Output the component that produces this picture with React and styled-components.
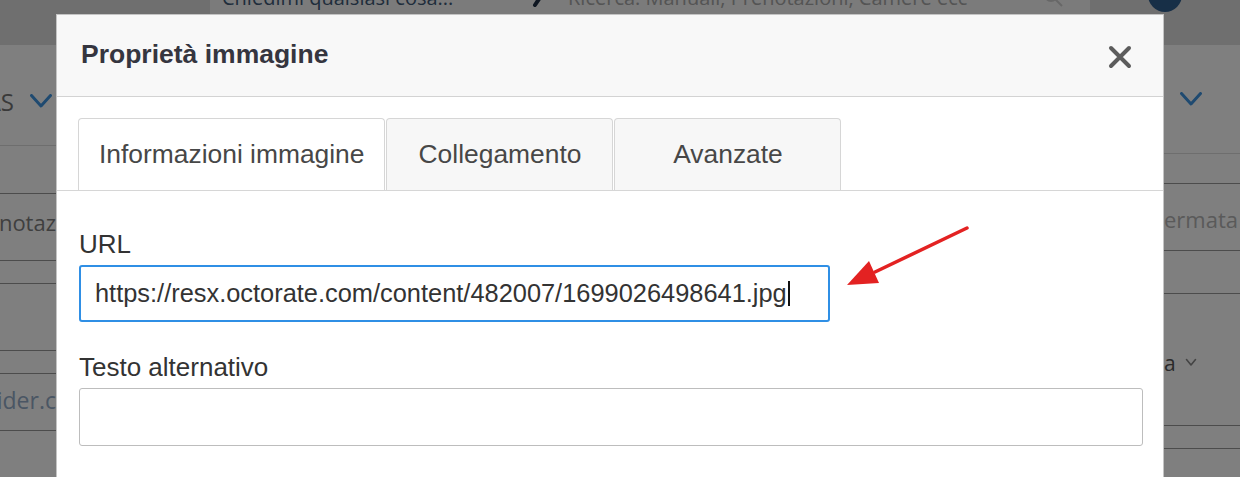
import React from "react";
import styled, { createGlobalStyle } from "styled-components";

const GlobalStyle = createGlobalStyle`
  html, body { margin: 0; padding: 0; }
  body {
    background: #fff;
    overflow: hidden;
    font-family: "Liberation Sans", Arial, sans-serif;
  }
`;

/* ---------- page behind the dialog ---------- */

const Page = styled.div`
  position: relative;
  width: 1240px;
  height: 477px;
  overflow: hidden;
  background: #ffffff;
  font-family: "Open Sans", "Noto Sans", sans-serif;
`;

const TopBar = styled.header`
  display: flex;
  align-items: flex-start;
  height: 45px;
  padding-left: 210px;
  box-sizing: border-box;
  background: #dedede;
`;

const SearchBox = styled.div`
  display: flex;
  align-items: center;
  gap: 20px;
  margin-top: -20px;
  width: 880px;
  height: 34px;
  padding-left: 12px;
  box-sizing: border-box;
  background: #f6f6f6;
`;

const Query = styled.span`
  width: 290px;
  font-size: 20px;
  color: #3f5a78;
  white-space: nowrap;
`;

const Hint = styled.span`
  flex: 1;
  font-size: 20px;
  color: #a8a8a8;
  white-space: nowrap;
`;

const Avatar = styled.div`
  width: 34px;
  height: 34px;
  margin-top: -22px;
  margin-left: 58px;
  border-radius: 50%;
  background: #2f5f8f;
`;

const Main = styled.main`
  display: flex;
  height: 432px;
`;

const SideCol = styled.div`
  width: ${(p) => p.$w}px;
  flex: none;
  display: flex;
  flex-direction: column;
  overflow: hidden;
`;

const Spacer = styled.div`
  flex: 1;
`;

const Row = styled.div`
  flex: none;
  height: ${(p) => p.$h}px;
  display: flex;
  align-items: center;
  justify-content: ${(p) => (p.$end ? "flex-end" : "flex-start")};
  gap: ${(p) => p.$gap || 0}px;
  padding: ${(p) => p.$pad || "0"};
  box-sizing: border-box;
  overflow: hidden;
  white-space: nowrap;
  border-bottom: 1px solid
    ${(p) =>
      p.$line === "faint" ? "#dcdcdc" : p.$line === "none" ? "transparent" : "#999999"};
`;

const BgText = styled.span`
  flex: none;
  font-size: ${(p) => p.$size || 21}px;
  color: ${(p) => p.$color || "#7e7e7e"};
`;

const Chevron = ({ w = 22, h = 12, color = "#3e94e0", sw = 3 }) => (
  <svg width={w} height={h + 2} viewBox={`0 0 ${w} ${h + 2}`} style={{ flex: "none" }}>
    <polyline
      points={`1.5,1.5 ${w / 2},${h} ${w - 1.5},1.5`}
      fill="none"
      stroke={color}
      strokeWidth={sw}
      strokeLinecap="round"
      strokeLinejoin="round"
    />
  </svg>
);

const Backdrop = styled.div`
  position: absolute;
  inset: 0;
  background: rgba(0, 0, 0, 0.5);
`;

/* ---------- dialog ---------- */

const Dialog = styled.section`
  position: absolute;
  left: 56px;
  top: 14px;
  width: 1108px;
  height: 540px;
  box-sizing: border-box;
  background: #ffffff;
  border: 1px solid #c4c4c4;
  font-family: "Liberation Sans", Arial, sans-serif;
`;

const DialogHeader = styled.div`
  display: flex;
  align-items: center;
  justify-content: space-between;
  height: 82px;
  padding: 0 31px 0 24px;
  box-sizing: border-box;
  background: #f8f8f8;
  border-bottom: 1px solid #d3d3d3;
`;

const Title = styled.h2`
  margin: 0 0 3px;
  font-size: 26.5px;
  line-height: 30px;
  font-weight: 700;
  color: #35353f;
`;

const CloseButton = styled.button`
  display: flex;
  padding: 0;
  margin-top: 2px;
  border: 0;
  background: none;
  cursor: pointer;
`;

const TabBar = styled.div`
  display: flex;
  gap: 1px;
  margin-top: 21px;
  padding-left: 21px;
  border-bottom: 1px solid #d6d6d6;
`;

const Tab = styled.div`
  display: flex;
  align-items: center;
  justify-content: center;
  min-width: 227px;
  height: 72px;
  padding: 0 20px;
  box-sizing: border-box;
  border: 1px solid #d6d6d6;
  border-bottom: 0;
  border-radius: 4px 4px 0 0;
  background: ${(p) => (p.$active ? "#ffffff" : "#f7f7f7")};
  font-size: 26.4px;
  color: #474747;
  white-space: nowrap;
`;

const DialogBody = styled.div`
  display: flex;
  flex-direction: column;
  gap: 30px;
  padding: 38px 20px 0 22px;
`;

const Field = styled.div`
  display: flex;
  flex-direction: column;
  gap: 6px;
`;

const Label = styled.label`
  font-size: 26px;
  line-height: 30px;
  color: #333333;
`;

const TextBox = styled.div`
  display: flex;
  align-items: center;
  width: ${(p) => (p.$w ? `${p.$w}px` : "100%")};
  height: ${(p) => p.$h}px;
  padding-left: 14px;
  box-sizing: border-box;
  border: ${(p) => (p.$focused ? "2px solid #2f8fe5" : "1px solid #bdbdbd")};
  border-radius: 3px;
  background: #ffffff;
  font-size: 25.4px;
  color: #333333;
  white-space: nowrap;
`;

const Caret = styled.span`
  display: inline-block;
  width: 2px;
  height: 25px;
  margin-left: 1px;
  background: #111;
`;

const Annotation = styled.svg`
  position: absolute;
  left: 784px;
  top: 206px;
  overflow: visible;
`;

export default function App() {
  return (
    <>
      <GlobalStyle />
      <Page>
        <TopBar>
          <SearchBox>
            <Query>Chiedimi qualsiasi cosa...</Query>
            <svg width="16" height="20" viewBox="0 0 16 20" style={{ flex: "none" }}>
              <path d="M3 18 L13 3" stroke="#1e2f44" strokeWidth="4" strokeLinecap="round" />
            </svg>
            <Hint>Ricerca: Manuali, Prenotazioni, Camere ecc</Hint>
            <svg width="22" height="22" viewBox="0 0 22 22" style={{ flex: "none", marginRight: 26 }}>
              <circle cx="9" cy="9" r="6" fill="none" stroke="#cfcfcf" strokeWidth="2" />
              <path d="M13.5 13.5 L20 20" stroke="#cfcfcf" strokeWidth="2" />
            </svg>
          </SearchBox>
          <Avatar />
        </TopBar>
        <Main>
          <SideCol $w={56}>
            <Row $h={101} $line="faint" $end $gap={16} $pad="12px 4px 0 0">
              <BgText $size={24} $color="#747474">Tutte le OTAS</BgText>
              <Chevron />
            </Row>
            <Row $h={48} />
            <Row $h={67} $end $pad="0 0 10px 0">
              <BgText $size={22}>Annotaz</BgText>
            </Row>
            <Row $h={23} />
            <Row $h={67} />
            <Row $h={23} />
            <Row $h={57} $end $pad="0 0 4px 0">
              <BgText $size={23} $color="#94acc8">info@booking.provider.c</BgText>
            </Row>
            <Row $h={60} $line="none" />
          </SideCol>
          <Spacer />
          <SideCol $w={76}>
            <Row $h={109} $line="faint" $pad="0 0 0 16px">
              <Chevron />
            </Row>
            <Row $h={30} />
            <Row $h={67} $pad="4px 0 0 0">
              <BgText $size={22} $color="#b4b4b4">ermata</BgText>
            </Row>
            <Row $h={43} />
            <Row $h={132} $gap={9} $pad="6px 0 0 0">
              <BgText $color="#545454">a</BgText>
              <Chevron w={12} h={7} sw={1.6} color="#888" />
            </Row>
            <Row $h={23} />
            <Row $h={30} $line="none" />
          </SideCol>
        </Main>
        <Backdrop />
        <Dialog role="dialog" aria-label="Proprietà immagine">
          <DialogHeader>
            <Title>Proprietà immagine</Title>
            <CloseButton aria-label="Chiudi">
              <svg width="24" height="24" viewBox="0 0 24 24">
                <path d="M3 3 L21 21 M21 3 L3 21" stroke="#5c5c5c" strokeWidth="4" strokeLinecap="round" />
              </svg>
            </CloseButton>
          </DialogHeader>
          <TabBar>
            <Tab $active>Informazioni immagine</Tab>
            <Tab>Collegamento</Tab>
            <Tab>Avanzate</Tab>
          </TabBar>
          <DialogBody>
            <Field>
              <Label>URL</Label>
              <TextBox $focused $w={751} $h={57}>
                https://resx.octorate.com/content/482007/1699026498641.jpg
                <Caret />
              </TextBox>
            </Field>
            <Field>
              <Label>Testo alternativo</Label>
              <TextBox $h={58} />
            </Field>
          </DialogBody>
          <Annotation width="135" height="75" viewBox="0 0 135 75">
            <line x1="126" y1="7" x2="34" y2="51" stroke="#e32222" strokeWidth="3.5" strokeLinecap="round" />
            <polygon points="6,64 38,62 28,40" fill="#e32222" />
          </Annotation>
        </Dialog>
      </Page>
    </>
  );
}
